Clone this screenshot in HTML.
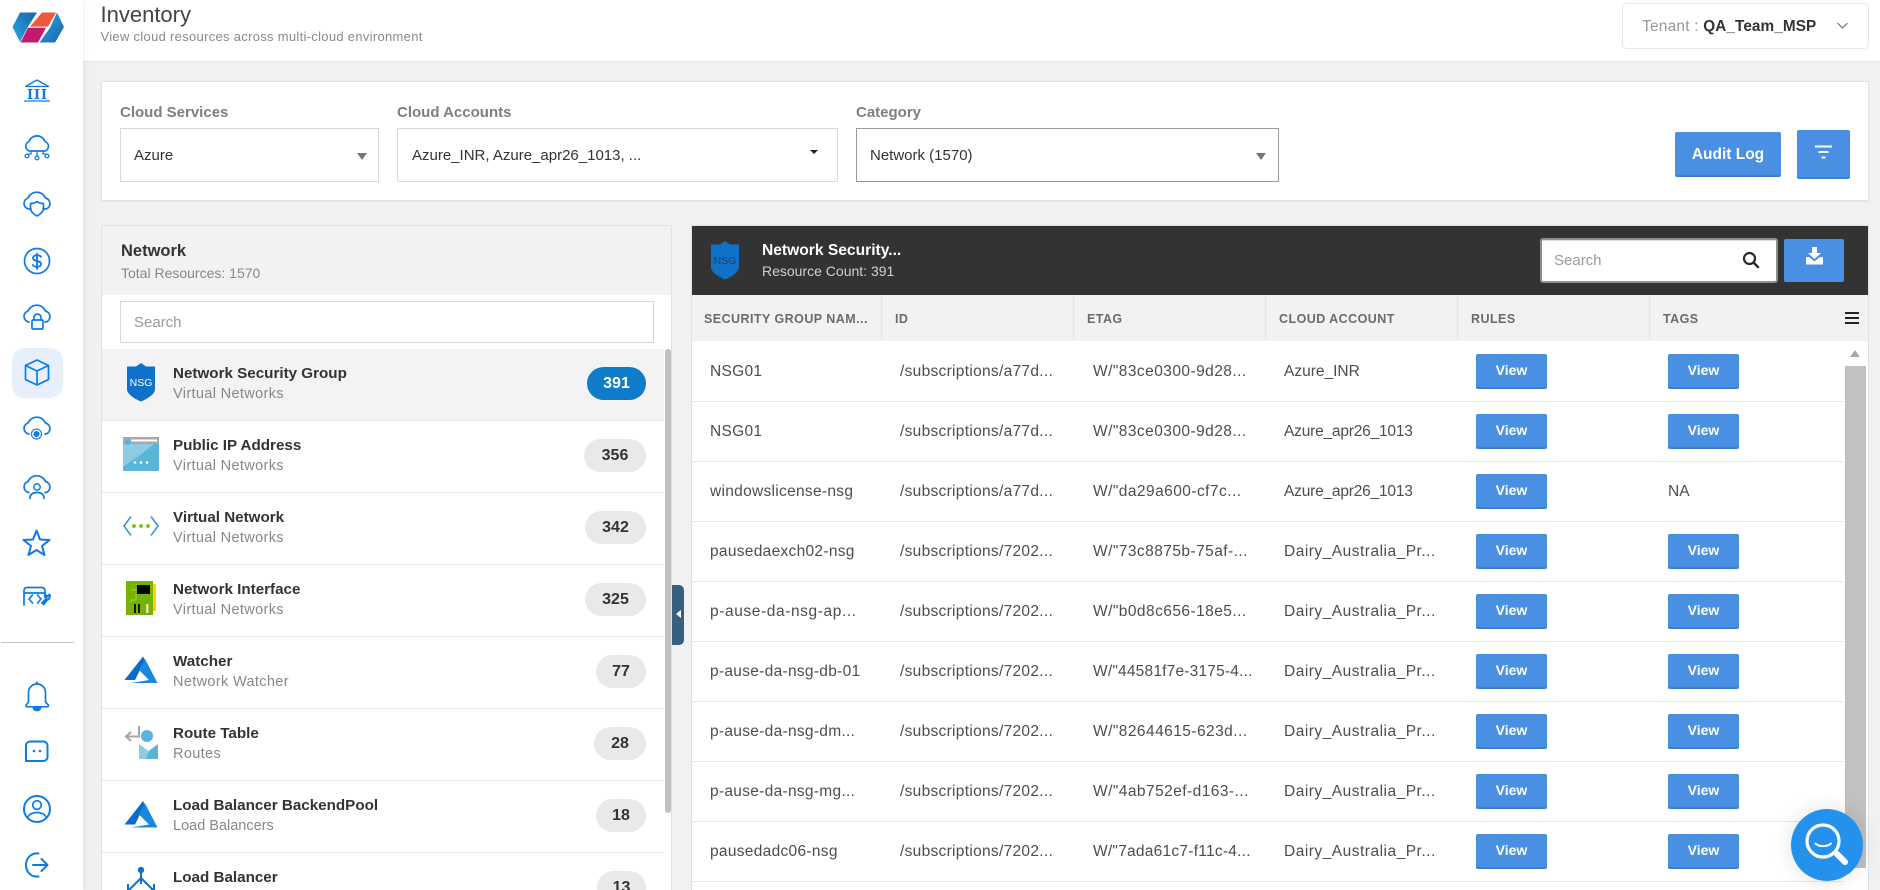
<!DOCTYPE html>
<html><head><meta charset="utf-8"><title>Inventory</title>
<style>
*{box-sizing:border-box}
html,body{margin:0;padding:0;width:1880px;height:890px;overflow:hidden;background:#f0f1f3;font-family:"Liberation Sans",sans-serif}
#w{position:relative;width:1880px;height:890px;overflow:hidden;background:#f0f1f3}
.a{position:absolute;white-space:nowrap}
.card{position:absolute;background:#fff;border:1px solid #e0e1e3;border-radius:2px}
.lab{position:absolute;top:103px;font-size:15px;line-height:20px;font-weight:bold;color:#7f7f7f;white-space:nowrap}
.sel{position:absolute;top:128px;height:54px;background:#fff;border:1px solid #d8d8d8;font-size:15px;line-height:54px;color:#333;padding-left:13px;white-space:nowrap}
.tri{position:absolute;width:0;height:0;border-left:5.5px solid transparent;border-right:5.5px solid transparent;border-top:7px solid #777}
.btn{position:absolute;background:#4a90e2;border-bottom:2px solid #3b80d6;border-radius:2px;color:#fff;font-weight:bold;text-align:center}
.it{position:absolute;left:102px;width:562px;height:72px;border-bottom:1px solid #e6e6e6;background:#fff}
.it b{position:absolute;left:71px;top:14px;font-size:15.2px;line-height:21px;color:#333;white-space:nowrap}
.it i{position:absolute;left:71px;top:36px;font-style:normal;font-size:14.5px;line-height:18px;color:#888;white-space:nowrap;letter-spacing:.35px}
.it u{position:absolute;right:18px;top:18px;height:33px;border-radius:17px;background:#e9e9e9;text-decoration:none;text-align:center;font-weight:bold;font-size:16px;line-height:33px;color:#333}
.th{position:absolute;top:296px;height:46px;line-height:46px;font-size:12.5px;font-weight:bold;color:#6b6b6b;white-space:nowrap;letter-spacing:.45px}
.vl{position:absolute;top:295px;height:46px;width:1px;background:#e4e4e4}
.r{position:absolute;left:692px;width:1151px;height:60px;background:#fff;border-bottom:1px solid #e6e6e6;font-size:15.5px;line-height:59px;color:#4d4d4d}
.r span{position:absolute;top:0;white-space:nowrap;letter-spacing:.3px}
.r .c1{left:18px}.r .c2{left:208px}.r .c3{left:401px;letter-spacing:.45px}.r .c4{left:592px;letter-spacing:0}.r .c6{left:976px;letter-spacing:0}
.r .p{letter-spacing:-.2px}.r .d{letter-spacing:.5px}
.r .e{letter-spacing:.6px}
.v{position:absolute;top:12px;width:71px;height:35px;line-height:33px;background:#4a90e2;border-bottom:2px solid #3b80d6;border-radius:2px;color:#fff;font-weight:bold;font-size:14px;text-align:center}
.v1{left:784px}.v2{left:976px}
</style></head>
<body>
<div id="w">
<!-- header -->
<div class="a" style="left:83px;top:0;width:1797px;height:62px;background:#fff;border-bottom:1px solid #e6e7e9"></div>
<div class="a" style="left:100.5px;top:1px;font-size:22px;line-height:28px;color:#444">Inventory</div>
<div class="a" style="left:100.5px;top:28px;font-size:13px;line-height:17px;color:#8a8a8a;letter-spacing:.3px">View cloud resources across multi-cloud environment</div>
<div class="a" style="left:1622px;top:3px;width:247px;height:46px;border:1px solid #e6e6e6;border-radius:5px;background:#fff"></div>
<div class="a" style="left:1642px;top:17px;font-size:15.5px;line-height:20px;color:#999;letter-spacing:.2px">Tenant : <span style="color:#333;font-weight:bold;font-size:15.3px;letter-spacing:.1px">QA_Team_MSP</span></div>
<svg class="a" style="left:1836px;top:21px" width="13" height="10"><path d="M1.5 2 6.5 7 11.5 2" fill="none" stroke="#666" stroke-width="1"/></svg>

<!-- sidebar -->
<div class="a" style="left:0;top:0;width:83px;height:890px;background:#fff;box-shadow:2px 0 5px rgba(0,0,0,.06)"></div>
<div class="a" style="left:12px;top:348px;width:51px;height:50px;border-radius:13px;background:#e7effc"></div>
<div class="a" style="left:1px;top:642px;width:73px;height:1px;background:#c4c4c4"></div>
<svg class="a" style="left:0;top:0" width="83" height="890">
<defs>
<linearGradient id="g1" x1="0" y1="1" x2="1" y2="0"><stop offset="0" stop-color="#29a9e0"/><stop offset="1" stop-color="#1a62ad"/></linearGradient>
<linearGradient id="g2" x1="0" y1="0" x2="1" y2="1"><stop offset="0" stop-color="#29a9e0"/><stop offset="1" stop-color="#1a62ad"/></linearGradient>
</defs>
<path d="M12.5 27 20 12.5H37L28 26.7 20 42Z" fill="url(#g1)"/>
<path d="M42 12.5H56L48 26.6H30Z" fill="#f0583e"/>
<path d="M28 27.7H46L38 42.5H20.6Z" fill="#c2186f"/>
<path d="M57 12.5 64 27 55 42.5H39.5L50 27.7Z" fill="url(#g2)"/>
<g fill="none" stroke="#0f7ae5" stroke-width="1.7" stroke-linecap="round" stroke-linejoin="round">
<!-- bank -->
<path d="M25.5 86.5 37 80 48.5 86.5Z" stroke-width="1.3"/>
<path d="M30 90V98M37 90V98M44 90V98" stroke-width="2.4" stroke-linecap="butt"/>
<path d="M28 89.5H32M35 89.5H39M42 89.5H46M28 98.5H32M35 98.5H39M42 98.5H46" stroke-width="1"/>
<path d="M24.5 101H49.5" stroke-width="1.3"/>
<!-- network cloud -->
<path d="M31 151H29.5A5 5 0 0 1 29 141.5 8.5 8.5 0 0 1 45 141.5 5 5 0 0 1 45 151H31Z"/>
<path d="M37 151V156M31 151V154H29M43 151V154H45" stroke-width="1.3"/>
<circle cx="27" cy="156" r="1.9" stroke-width="1.3"/><circle cx="37" cy="158" r="1.9" stroke-width="1.3"/><circle cx="47" cy="156" r="1.9" stroke-width="1.3"/>
<!-- shield cloud -->
<path d="M31 209H28.5A5.7 5.7 0 0 1 28 198 9.5 9.5 0 0 1 45.5 198 5.7 5.7 0 0 1 46 209H43"/>
<path d="M30.5 203.5C33 203.5 35.5 202.8 37 201.5 38.5 202.8 41 203.5 43.5 203.5V208.5C43.5 211.5 40 214.5 37 216 34 214.5 30.5 211.5 30.5 208.5Z"/>
<!-- dollar -->
<circle cx="37" cy="261" r="12.5"/>
<path d="M41 256.8C40 255.5 38.5 255.2 37 255.2 34.8 255.2 33 256.3 33 258 33 262 41 260 41 264 41 265.8 39 266.800 37 266.800 35.300 266.800 33.800 266.300 32.800 265M37 253.500V269" stroke-width="1.8"/>
<!-- lock cloud -->
<path d="M29 322H28.5A5.7 5.7 0 0 1 28 311 9.5 9.5 0 0 1 45.5 311 5.7 5.7 0 0 1 46 322H45"/>
<rect x="32" y="320" width="11" height="9" rx="1"/><path d="M34 320V317.5A3.5 3.5 0 0 1 41 317.5V320"/>
<!-- cube -->
<path d="M37 360 48.5 365.5V379.5L37 385 25.5 379.5V365.5ZM25.5 365.5 37 371 48.5 365.5M37 371V385"/>
<!-- gear cloud -->
<path d="M29 434H28.5A5.7 5.7 0 0 1 28 423 9.5 9.5 0 0 1 45.5 423 5.7 5.7 0 0 1 46 434H45"/>
<circle cx="36.5" cy="434" r="3" fill="#0f7ae5" stroke="none"/><circle cx="36.5" cy="434" r="5" stroke-width="1.3" stroke-dasharray="2 1.3"/>
<!-- user cloud -->
<path d="M29 492.5H28.5A5.7 5.7 0 0 1 28 481.5 9.5 9.5 0 0 1 45.5 481.5 5.7 5.7 0 0 1 46 492.5H45"/>
<circle cx="37" cy="487" r="3.2" stroke-width="1.5"/><path d="M30 498.5C30 494 33 492.5 37 492.5 41 492.5 44 494 44 498.5"/>
<!-- star -->
<path d="M36.5 530.5 40 539.5 49.5 540 42 546 44.5 555 36.5 550 28.5 555 31 546 23.5 540 33 539.5Z" stroke-width="2"/>
<!-- dev -->
<path d="M24 605V590.5A3 3 0 0 1 27 587.5H42A3 3 0 0 1 45 590.5V594M24 593H45" />
<path d="M32.5 595 29 599 32.5 603M37.5 595 41 599 37.5 603"/>
<path d="M42 603 46.5 598.5A3.5 3.5 0 0 1 45 594.5L47 596.5 49.5 594.5A4 4 0 0 1 47 600L43.5 604.5" stroke-width="2"/>
<!-- bell -->
<path d="M26 705.5C26 704 28.5 703.5 28.5 701V692.5A8.5 8.5 0 0 1 45.5 692.5V701C45.5 703.5 48.5 704 48.5 705.5 48.5 706.5 47.5 706.8 46.5 706.8H27.5C26.5 706.8 26 706.5 26 705.5Z"/>
<path d="M37 682.5V684" stroke-width="2"/>
<path d="M33.5 708H40.5C40.2 709.5 38.8 710.5 37 710.5 35.2 710.5 33.8 709.5 33.5 708Z" fill="#0f7ae5"/>
<!-- chat -->
<path d="M30 741.5H43.5A4 4 0 0 1 47.5 745.5V757A4 4 0 0 1 43.5 761H26V745.5A4 4 0 0 1 30 741.5Z" stroke-width="2"/>
<circle cx="34" cy="751" r="1.3" fill="#0f7ae5" stroke="none"/><circle cx="40" cy="751" r="1.3" fill="#0f7ae5" stroke="none"/>
<!-- user -->
<circle cx="37" cy="809" r="13" stroke-width="2"/>
<circle cx="37" cy="805" r="4.3"/>
<path d="M27.5 817.5C29.5 813.5 33 812.5 37 812.5 41 812.5 44.5 813.5 46.5 817.5"/>
<!-- exit -->
<path d="M38.5 853.5C32 852.5 26 857.5 26 865 26 872.5 32 877.5 38.5 876.5" stroke-width="2"/>
<path d="M33 865H47.5M41.5 859 47.5 865 41.5 871" stroke-width="2"/>
</g>
</svg>

<!-- filter card -->
<div class="card" style="left:101px;top:81px;width:1768px;height:120px;box-shadow:0 1px 2px rgba(0,0,0,.05)"></div>
<div class="lab" style="left:120px">Cloud Services</div>
<div class="lab" style="left:397px">Cloud Accounts</div>
<div class="lab" style="left:856px">Category</div>
<div class="sel" style="left:120px;width:259px">Azure</div>
<div class="tri" style="left:357px;top:153px"></div>
<div class="sel" style="left:397px;width:441px;border-radius:2px;padding-left:14px">Azure_INR, Azure_apr26_1013, ...</div>
<div class="tri" style="left:810px;top:150px;border-top-color:#222;border-left-width:4.5px;border-right-width:4.5px;border-top-width:4.5px"></div>
<div class="sel" style="left:856px;width:423px;border-color:#9a9a9a">Network (1570)</div>
<div class="tri" style="left:1256px;top:153px"></div>
<div class="btn" style="left:1675px;top:132px;width:106px;height:45px;font-size:15.5px;line-height:45px">Audit Log</div>
<div class="btn" style="left:1797px;top:130px;width:53px;height:49px"></div>
<svg class="a" style="left:1814px;top:145px" width="20" height="15"><path d="M1 1.5H18M4.5 7H14.5M7.5 12.5H11.5" stroke="#fff" stroke-width="2" fill="none"/></svg>

<!-- left panel -->
<div class="a" style="left:101px;top:225px;width:571px;height:670px;background:#fff;border:1px solid #e0e1e3;border-radius:2px 2px 0 0;overflow:hidden"></div>
<div class="a" style="left:102px;top:226px;width:569px;height:69px;background:#f2f2f2"></div>
<div class="a" style="left:121px;top:241px;font-size:16.5px;line-height:20px;font-weight:bold;color:#333">Network</div>
<div class="a" style="left:121px;top:264px;font-size:14px;line-height:18px;color:#888">Total Resources: 1570</div>
<div class="a" style="left:120px;top:301px;width:534px;height:42px;border:1px solid #d6d6d6;background:#fff;font-size:15px;line-height:41px;color:#999;padding-left:13px">Search</div>

<div class="it" style="top:349px;background:#f3f3f3"><b>Network Security Group</b><i>Virtual Networks</i><u style="width:59px;background:#0f7cc9;color:#fff">391</u></div>
<div class="it" style="top:421px"><b>Public IP Address</b><i>Virtual Networks</i><u style="width:62px">356</u></div>
<div class="it" style="top:493px"><b>Virtual Network</b><i>Virtual Networks</i><u style="width:61px">342</u></div>
<div class="it" style="top:565px"><b>Network Interface</b><i>Virtual Networks</i><u style="width:61px">325</u></div>
<div class="it" style="top:637px"><b>Watcher</b><i>Network Watcher</i><u style="width:50px">77</u></div>
<div class="it" style="top:709px"><b>Route Table</b><i>Routes</i><u style="width:52px">28</u></div>
<div class="it" style="top:781px"><b>Load Balancer BackendPool</b><i style="letter-spacing:0">Load Balancers</i><u style="width:50px">18</u></div>
<div class="it" style="top:853px;height:37px;overflow:hidden;border:0"><b>Load Balancer</b><u style="width:49px">13</u></div>

<svg class="a" style="left:102px;top:349px;width:70px;height:541px" viewBox="102 349 70 541">
<!-- NSG -->
<path d="M141 363 146 366.5H155V389C155 394.5 147 399 141 401.5 135 399 127 394.5 127 389V366.5H136Z" fill="#0f72c8"/>
<text x="141" y="386" font-family="Liberation Sans" font-size="10.5" fill="#fff" text-anchor="middle">NSG</text>
<!-- Public IP -->
<rect x="123" y="437" width="36" height="34" rx="1.5" fill="#59b4d9"/>
<path d="M123 444H154L139 456 123 467Z" fill="#8ccbe5"/>
<rect x="123" y="437" width="36" height="7" fill="#a8a9aa"/>
<rect x="131" y="439.5" width="26" height="2" fill="#fff"/>
<circle cx="128" cy="442" r="3" fill="#59b4d9"/>
<circle cx="135" cy="462.5" r="1.3" fill="#fff"/><circle cx="141" cy="462.5" r="1.3" fill="#fff"/><circle cx="147" cy="462.5" r="1.3" fill="#fff"/>
<!-- VNet -->
<path d="M131 516.5 124 526 131 535.5M151 516.5 158 526 151 535.5" fill="none" stroke="#3999c6" stroke-width="1.6"/>
<circle cx="134" cy="526" r="1.9" fill="#7fba00"/><circle cx="141" cy="526" r="1.9" fill="#7fba00"/><circle cx="148" cy="526" r="1.9" fill="#7fba00"/>
<!-- NIC -->
<rect x="153" y="584" width="3" height="27" fill="#ffd400"/>
<rect x="126" y="581" width="27" height="34" fill="#76b300"/>
<rect x="137" y="585" width="13" height="9" fill="#000"/>
<path d="M131 590H137M136 594V600H131V603" stroke="#a5d24a" stroke-width="1" fill="none"/>
<rect x="134" y="604" width="2" height="9" fill="#111"/><rect x="138" y="604" width="2" height="9" fill="#111"/><rect x="146" y="604" width="2.5" height="9" fill="#d8e8b0"/>
<!-- Azure -->
<path d="M143 656.5 124.5 680H135L139 672 145 660Z" fill="#0a6cc8"/><path d="M145 659 157.5 683H131L149 680 139 670Z" fill="#1a88dc"/>
<g transform="translate(0,144.5)"><path d="M143 656.5 124.5 680H135L139 672 145 660Z" fill="#0a6cc8"/><path d="M145 659 157.5 683H131L149 680 139 670Z" fill="#1a88dc"/></g>
<!-- Route table -->
<path d="M139 726V736.5H127M131 732 126 736.5 131 741" fill="none" stroke="#a6a6a6" stroke-width="2"/>
<circle cx="147" cy="736" r="6" fill="#59b4d9"/>
<path d="M139 744H158V759H139Z" fill="#8ccbe5"/><path d="M149 751 158 744V759H146Z" fill="#59b4d9"/><path d="M139 744H158L148.5 751Z" fill="#fff"/>
<!-- LB -->
<circle cx="141" cy="870" r="3.2" fill="#0f72c8"/>
<path d="M141 872V884M141 878 129 890M141 878 153 890M128 884V890M154 884V890" fill="none" stroke="#0f72c8" stroke-width="2"/>
</svg>

<div class="a" style="left:665px;top:349px;width:6px;height:464px;background:#c1c1c1;border-radius:3px"></div>
<div class="a" style="left:672px;top:585px;width:12px;height:60px;background:#3a5e7e;border-radius:0 5px 5px 0"></div>
<div class="a" style="left:676px;top:610px;width:0;height:0;border-top:4.5px solid transparent;border-bottom:4.5px solid transparent;border-right:5px solid #fff"></div>

<!-- right panel -->
<div class="a" style="left:691px;top:225px;width:1178px;height:670px;background:#fff;border:1px solid #e0e1e3;border-radius:2px 2px 0 0"></div>
<div class="a" style="left:692px;top:226px;width:1176px;height:69px;background:#333"></div>
<svg class="a" style="left:710px;top:240px" width="30" height="40" viewBox="0 0 30 40"><path d="M15 1 20 4.5H29V27C29 32.5 21 37 15 39.5 9 37 1 32.5 1 27V4.5H10Z" fill="#0f72c8"/><text x="15" y="24" font-family="Liberation Sans" font-size="10.5" fill="#1d3f66" text-anchor="middle">NSG</text></svg>
<div class="a" style="left:762px;top:241px;font-size:15.6px;line-height:20px;font-weight:bold;color:#fff">Network Security...</div>
<div class="a" style="left:762px;top:262px;font-size:14px;line-height:18px;color:#d0d0d0">Resource Count: 391</div>
<div class="a" style="left:1540px;top:238px;width:238px;height:45px;background:#fff;border:2px solid #8f8f8f;border-radius:3px;font-size:15px;line-height:41px;color:#999;padding-left:12px;box-shadow:inset 0 1px 0 #ddd">Search</div>
<svg class="a" style="left:1742px;top:251px" width="18" height="18"><circle cx="7.5" cy="7.5" r="5.5" fill="none" stroke="#2a2a2a" stroke-width="2.2"/><path d="M11.5 11.5 16 16" stroke="#2a2a2a" stroke-width="2.5" stroke-linecap="round"/></svg>
<div class="a" style="left:1784px;top:239px;width:60px;height:43px;background:#4a90e2;border-radius:2px"></div>
<svg class="a" style="left:1805px;top:247px" width="19" height="18"><path d="M7 0H12V6H16L9.5 12 3 6H7Z" fill="#fff"/><path d="M1 10H4L9.5 14.5 15 10H18V17.5H1Z" fill="#fff"/></svg>

<div class="a" style="left:692px;top:295px;width:1176px;height:46px;background:#f2f2f2"></div>
<div class="vl" style="left:881px"></div><div class="vl" style="left:1073px"></div><div class="vl" style="left:1265px"></div><div class="vl" style="left:1457px"></div><div class="vl" style="left:1649px"></div>
<div class="th" style="left:704px">SECURITY GROUP NAM...</div>
<div class="th" style="left:895px">ID</div>
<div class="th" style="left:1087px">ETAG</div>
<div class="th" style="left:1279px">CLOUD ACCOUNT</div>
<div class="th" style="left:1471px">RULES</div>
<div class="th" style="left:1663px">TAGS</div>
<svg class="a" style="left:1845px;top:311px" width="14" height="14"><path d="M0 2H14M0 7H14M0 12H14" stroke="#222" stroke-width="2"/></svg>

<div class="r" style="top:342px"><span class="c1">NSG01</span><span class="c2">/subscriptions/a77d...</span><span class="c3">W/"83ce0300-9d28...</span><span class="c4">Azure_INR</span><div class="v v1">View</div><div class="v v2">View</div></div>
<div class="r" style="top:402px"><span class="c1">NSG01</span><span class="c2">/subscriptions/a77d...</span><span class="c3">W/"83ce0300-9d28...</span><span class="c4 p">Azure_apr26_1013</span><div class="v v1">View</div><div class="v v2">View</div></div>
<div class="r" style="top:462px"><span class="c1">windowslicense-nsg</span><span class="c2">/subscriptions/a77d...</span><span class="c3">W/"da29a600-cf7c...</span><span class="c4 p">Azure_apr26_1013</span><div class="v v1">View</div><span class="c6">NA</span></div>
<div class="r" style="top:522px"><span class="c1">pausedaexch02-nsg</span><span class="c2">/subscriptions/7202...</span><span class="c3">W/"73c8875b-75af-...</span><span class="c4 d">Dairy_Australia_Pr...</span><div class="v v1">View</div><div class="v v2">View</div></div>
<div class="r" style="top:582px"><span class="c1 e">p-ause-da-nsg-ap...</span><span class="c2">/subscriptions/7202...</span><span class="c3">W/"b0d8c656-18e5...</span><span class="c4 d">Dairy_Australia_Pr...</span><div class="v v1">View</div><div class="v v2">View</div></div>
<div class="r" style="top:642px"><span class="c1">p-ause-da-nsg-db-01</span><span class="c2">/subscriptions/7202...</span><span class="c3" style="letter-spacing:.2px">W/"44581f7e-3175-4...</span><span class="c4 d">Dairy_Australia_Pr...</span><div class="v v1">View</div><div class="v v2">View</div></div>
<div class="r" style="top:702px"><span class="c1">p-ause-da-nsg-dm...</span><span class="c2">/subscriptions/7202...</span><span class="c3">W/"82644615-623d...</span><span class="c4 d">Dairy_Australia_Pr...</span><div class="v v1">View</div><div class="v v2">View</div></div>
<div class="r" style="top:762px"><span class="c1">p-ause-da-nsg-mg...</span><span class="c2">/subscriptions/7202...</span><span class="c3">W/"4ab752ef-d163-...</span><span class="c4 d">Dairy_Australia_Pr...</span><div class="v v1">View</div><div class="v v2">View</div></div>
<div class="r" style="top:822px"><span class="c1">pausedadc06-nsg</span><span class="c2">/subscriptions/7202...</span><span class="c3" style="letter-spacing:.25px">W/"7ada61c7-f11c-4...</span><span class="c4 d">Dairy_Australia_Pr...</span><div class="v v1">View</div><div class="v v2">View</div></div>

<!-- table scrollbar -->
<div class="a" style="left:1850px;top:350px;width:0;height:0;border-left:5.5px solid transparent;border-right:5.5px solid transparent;border-bottom:7px solid #a8a8a8"></div>
<div class="a" style="left:1845px;top:366px;width:21px;height:502px;background:#c1c1c1"></div>

<!-- fab -->
<div class="a" style="left:1791px;top:809px;width:72px;height:72px;border-radius:50%;background:#2492ec;box-shadow:0 0 20px rgba(0,0,0,.12)"></div>
<svg class="a" style="left:1791px;top:809px" width="72" height="72"><circle cx="32" cy="32" r="16" fill="none" stroke="#fff" stroke-width="3.2"/><path d="M46 45 54 53" stroke="#fff" stroke-width="6" stroke-linecap="round"/><path d="M24.5 34.5C28 38 36 38 40 34.5" fill="none" stroke="#fff" stroke-width="2" stroke-linecap="round"/></svg>
</div>
</body></html>
